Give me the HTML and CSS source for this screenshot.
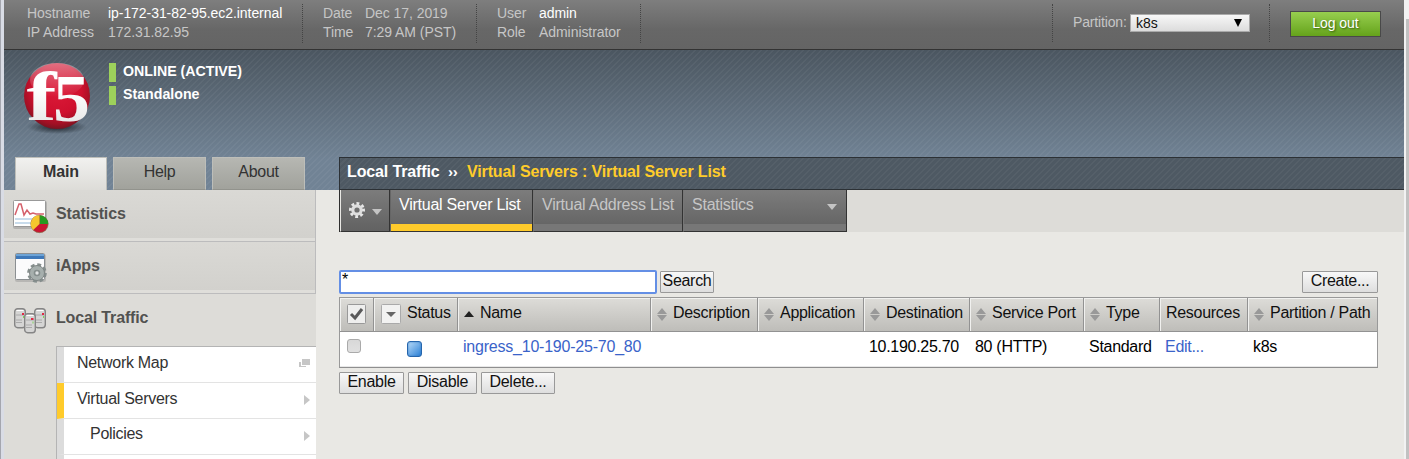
FILE: index.html
```html
<!DOCTYPE html>
<html lang="en">
<head>
<meta charset="utf-8">
<title>Virtual Server List</title>
<link rel="stylesheet" href="styles.css">
</head>
<body>
<div class="window">
  <div class="app">
    <header class="topbar">
      <dl class="info info-host"><dt>Hostname</dt><dd class="bright">ip-172-31-82-95.ec2.internal</dd><dt>IP Address</dt><dd>172.31.82.95</dd></dl>
      <dl class="info info-date"><dt>Date</dt><dd>Dec 17, 2019</dd><dt>Time</dt><dd>7:29 AM (PST)</dd></dl>
      <dl class="info info-user"><dt>User</dt><dd class="bright">admin</dd><dt>Role</dt><dd>Administrator</dd></dl>
      <div class="partition"><span>Partition:</span><div class="select"><span>k8s</span><svg width="8" height="8" viewBox="0 0 8 8"><path d="M0 0h8L4 8z"/></svg></div></div>
      <div class="logout-wrap"><button class="logout">Log out</button></div>
    </header>
    <div class="banner">
      <div class="brand">
        <svg class="logo" width="74" height="76" viewBox="0 0 74 76">
          <defs>
            <radialGradient id="ball" cx=".5" cy=".4" r=".62"><stop offset="0" stop-color="#dc1a38"/><stop offset=".6" stop-color="#cf102e"/><stop offset=".85" stop-color="#a01024"/><stop offset="1" stop-color="#6d1520"/></radialGradient>
            <linearGradient id="gloss" x1="0" y1="0" x2="0" y2="1"><stop offset="0" stop-color="#fff" stop-opacity=".4"/><stop offset="1" stop-color="#fff" stop-opacity="0"/></linearGradient>
            <linearGradient id="letters" x1="0" y1="0" x2="0" y2="1"><stop offset=".4" stop-color="#fff"/><stop offset="1" stop-color="#e0e0e0"/></linearGradient>
            <radialGradient id="shade"><stop offset="0" stop-color="#1b2229"/><stop offset="1" stop-color="#1b2229" stop-opacity="0"/></radialGradient>
          </defs>
          <ellipse cx="37" cy="67" rx="30" ry="7" fill="url(#shade)"/>
          <circle cx="37" cy="36" r="33" fill="url(#ball)"/>
          <ellipse cx="37" cy="20" rx="27" ry="17" fill="url(#gloss)"/>
          <text x="6.500" y="59.500" class="logo-text" fill="url(#letters)" textLength="30" lengthAdjust="spacingAndGlyphs">f</text>
          <text x="33" y="60.500" class="logo-text logo-five" fill="url(#letters)" textLength="37" lengthAdjust="spacingAndGlyphs">5</text>
        </svg>
        <div class="states"><div class="state">ONLINE (ACTIVE)</div><div class="state">Standalone</div></div>
      </div>
      <div class="banner-foot">
        <nav class="main-tabs"><a class="main-tab main-tab-on">Main</a><a class="main-tab">Help</a><a class="main-tab">About</a></nav>
        <div class="crumbs"><span class="crumb-root">Local Traffic</span><span class="crumb-sep">››</span><span class="crumb-page">Virtual Servers : Virtual Server List</span></div>
      </div>
    </div>
    <div class="body">
      <aside class="sidebar">
        <div class="section section-closed">
          <svg width="40" height="40" viewBox="0 0 40 40"><rect x="1" y="3" width="34" height="28" rx="2" fill="#777" opacity=".35"/><rect x="1.500" y="2.500" width="32" height="26" rx="1" fill="#fff" stroke="#999"/><path d="M3 21h29M3 25h29" stroke="#c9dcec" stroke-width="2"/><path d="M3 17l4-11h2l3 11 3-5 3 4 3-1 3 1h8" fill="none" stroke="#d5606b" stroke-width="1.500"/><circle cx="27.500" cy="26" r="8.700" fill="#c91631" stroke="#77764a" stroke-width=".6"/><path d="M27.500 26V17.300a8.700 8.700 0 0 1 8.700 8.700z" fill="#269b20"/><path d="M27.500 26V17.300a8.700 8.700 0 0 0-6.300 14.700z" fill="#f5c62e"/></svg>
          <span>Statistics</span>
        </div>
        <div class="section section-closed">
          <svg width="40" height="40" viewBox="0 0 40 40"><rect x="3" y="4" width="31" height="28" rx="2" fill="#777" opacity=".3"/><rect x="3.500" y="3.500" width="29" height="26" rx="1" fill="#fbfbfc" stroke="#8b8f92"/><path d="M4 4h28v5H4z" fill="#3e78b9"/><path d="M4 4h28v2H4z" fill="#6ca3d6"/><circle cx="25" cy="23" r="8.300" fill="none" stroke="#858e8d" stroke-width="3" stroke-dasharray="3.800 2.718"/><circle cx="25" cy="23" r="7.500" fill="#a6afad" stroke="#7f8685"/><circle cx="25" cy="23" r="3.300" fill="#858e8d"/><circle cx="25" cy="23" r="1.700" fill="#e2e5e5"/></svg>
          <span>iApps</span>
        </div>
        <div class="section section-open">
          <svg width="40" height="40" viewBox="0 0 40 40">
            <defs><g id="server"><rect x=".7" y=".7" width="10.600" height="19" rx="3" fill="#d5d5d4" stroke="#858585" stroke-width="1.400"/><path d="M2.500 2.500h7" stroke="#fff"/><path d="M2 7h8M2 12h6M2 14.500h6" stroke="#aaa"/></g></defs>
            <use href="#server" x="2" y="6"/><use href="#server" x="22" y="6"/><use href="#server" x="12" y="11"/>
            <path d="M10 11h2v2h-2zM30 11h2v2h-2zM19 16h2.500v2H19z" fill="#e02a44"/><path d="M11 14h1v2h-1zM31 14h1v2h-1zM20.500 19.500h1v2h-1z" fill="#7ed45e"/>
          </svg>
          <span>Local Traffic</span>
        </div>
        <nav class="submenu">
          <a class="sub"><span>Network Map</span><svg width="11" height="8" viewBox="0 0 11 8"><path d="M3 0h8v6H3z" fill="#c6c6c6"/><path d="M0 3h2v4h5v1H0z" fill="#c6c6c6"/></svg></a>
          <a class="sub sub-on"><span>Virtual Servers</span><svg width="6" height="10" viewBox="0 0 6 10"><path d="M0 0l6 5-6 5z" fill="#c6c6c6"/></svg></a>
          <a class="sub sub-nested"><span>Policies</span><svg width="6" height="10" viewBox="0 0 6 10"><path d="M0 0l6 5-6 5z" fill="#c6c6c6"/></svg></a>
          <a class="sub"></a>
        </nav>
      </aside>
      <main class="content">
        <div class="tabbar">
          <a class="tab tab-gear"><svg width="18" height="18" viewBox="0 0 18 18"><circle cx="9" cy="9" r="6.500" fill="none" stroke="#e6e6e6" stroke-width="3" stroke-dasharray="2.700 2.405" transform="rotate(-11 9 9)"/><circle cx="9" cy="9" r="4.200" fill="none" stroke="#dedede" stroke-width="3.200"/></svg><svg width="10" height="6" viewBox="0 0 10 6"><path d="M0 0h10L5 6z" fill="#c4c4c4"/></svg></a>
          <a class="tab tab-on tab-list">Virtual Server List</a>
          <a class="tab tab-address">Virtual Address List</a>
          <a class="tab tab-stats"><span>Statistics</span><svg width="10" height="6" viewBox="0 0 10 6"><path d="M0 0h10L5 6z" fill="#c4c4c4"/></svg></a>
        </div>
        <div class="panel">
          <div class="tools"><input class="search" value="*"><button class="btn btn-search">Search</button><button class="btn btn-create">Create...</button></div>
          <div class="grid">
            <div class="th th-check"><svg width="19" height="20" viewBox="0 0 19 20"><rect x=".5" y=".5" width="18" height="19" rx="1" fill="#eeeeed" stroke="#999"/><path d="M4 10l4 4 7-9" fill="none" stroke="#595959" stroke-width="3"/></svg></div>
            <div class="th th-status"><svg width="20" height="20" viewBox="0 0 20 20"><rect x=".5" y=".5" width="19" height="19" rx="1" fill="#f2f2f1" stroke="#aaa"/><path d="M5 8h10l-5 5z" fill="#666"/></svg><span>Status</span></div>
            <div class="th th-name"><svg width="10" height="6" viewBox="0 0 10 6"><path d="M0 6h10L5 0z" fill="#222"/></svg><span>Name</span></div>
            <div class="th"><svg class="sort" width="10" height="13" viewBox="0 0 10 13"><path d="M0 6h10L5 0zM0 7h10L5 13z"/></svg><span>Description</span></div>
            <div class="th"><svg class="sort" width="10" height="13" viewBox="0 0 10 13"><path d="M0 6h10L5 0zM0 7h10L5 13z"/></svg><span>Application</span></div>
            <div class="th"><svg class="sort" width="10" height="13" viewBox="0 0 10 13"><path d="M0 6h10L5 0zM0 7h10L5 13z"/></svg><span>Destination</span></div>
            <div class="th"><svg class="sort" width="10" height="13" viewBox="0 0 10 13"><path d="M0 6h10L5 0zM0 7h10L5 13z"/></svg><span>Service Port</span></div>
            <div class="th"><svg class="sort" width="10" height="13" viewBox="0 0 10 13"><path d="M0 6h10L5 0zM0 7h10L5 13z"/></svg><span>Type</span></div>
            <div class="th"><span>Resources</span></div>
            <div class="th"><svg class="sort" width="10" height="13" viewBox="0 0 10 13"><path d="M0 6h10L5 0zM0 7h10L5 13z"/></svg><span>Partition / Path</span></div>
            <div class="td td-check"><span class="checkbox"></span></div>
            <div class="td td-status"><span class="status-icon"></span></div>
            <div class="td"><a class="link link-name">ingress_10-190-25-70_80</a></div>
            <div class="td"></div>
            <div class="td"></div>
            <div class="td">10.190.25.70</div>
            <div class="td">80 (HTTP)</div>
            <div class="td">Standard</div>
            <div class="td"><a class="link">Edit...</a></div>
            <div class="td">k8s</div>
          </div>
          <div class="actions"><button class="btn btn-enable">Enable</button><button class="btn btn-disable">Disable</button><button class="btn btn-delete">Delete...</button></div>
        </div>
      </main>
    </div>
  </div>
  <div class="scrollbar"><div class="thumb"></div></div>
</div>
</body>
</html>
```
FILE: styles.css
```css
* { box-sizing: border-box; }
body { margin: 0; overflow: hidden; font-family: "Liberation Sans", Arial, sans-serif; font-size: 16px; letter-spacing: -.29px; background: #e9e8e4; }
svg { display: block; flex: none; }
button, input { font: inherit; letter-spacing: inherit; margin: 0; border-radius: 0; outline: 0; }
.window { display: flex; width: 1409px; height: 459px; overflow: hidden; border-left: 1px solid #a4a6ae; }
.app { width: 1403px; border-left: 3px solid #d9dce5; flex: none; }
.scrollbar { flex: 1; background: #f2f2f2; padding: 19px 0 0 2px; }
.thumb { height: 440px; background: #c1c1c1; }

.topbar { display: flex; height: 50px; padding-top: 4px; border-bottom: 1px solid #333; background: linear-gradient(#7e7e7e, #676767 60%, #646464); color: #c6c6c6; font-size: 14px; letter-spacing: -.06px; }
.info { display: grid; grid-auto-rows: 19px; line-height: 19px; margin: 0; height: 39px; border-right: 1px dotted #444; white-space: nowrap; }
.info dd { margin: 0; }
.bright { color: #fff; }
.info-host { width: 299px; padding-left: 23px; grid-template-columns: 81px 1fr; }
.info-date { width: 174px; padding-left: 20px; grid-template-columns: 42px 1fr; }
.info-user { width: 164px; padding-left: 20px; grid-template-columns: 42px 1fr; }
.partition { display: flex; align-items: flex-start; margin-left: 411px; width: 218px; height: 38px; padding: 10px 0 0 20px; border: 1px dotted #444; border-width: 0 1px; line-height: 17px; }
.partition > span { width: 57px; flex: none; letter-spacing: -.15px; }
.select { display: flex; align-items: center; justify-content: space-between; width: 120px; height: 18px; padding: 0 7px 0 5px; border: 1px solid #aaa; background: linear-gradient(#f7f7f7, #dcdcdc); color: #111; }
.logout-wrap { padding: 7px 0 0 20px; }
.logout { width: 91px; height: 26px; padding: 0 0 3px; border: 1px solid #494949; background: linear-gradient(#97ce4f, #65a31b); color: #fff; text-shadow: 1px 1px 2px #35570e; }

.banner { display: flex; flex-direction: column; justify-content: space-between; height: 140px; background: repeating-linear-gradient(135deg, rgba(255,255,255,.045) 0 2px, transparent 2px 4.243px), linear-gradient(#4b5660, #718395 78%, #718395); }
.brand { display: flex; padding: 10px 0 0 16px; }
.logo-text { font-family: "Liberation Serif", serif; font-weight: bold; font-size: 69px; letter-spacing: 0; }
.logo-five { font-size: 67px; }
.states { padding: 3px 0 0 15px; display: grid; grid-auto-rows: 19px; row-gap: 4px; align-content: start; }
.state { border-left: 7px solid #9dd15b; padding-left: 7px; color: #fff; font-weight: bold; font-size: 14.2px; line-height: 16px; letter-spacing: 0; }
.banner-foot { display: flex; justify-content: space-between; height: 33px; }
.main-tabs { display: flex; gap: 6px; padding-left: 11px; }
.main-tab { width: 93px; height: 33px; border: 1px solid #bdbeb9; border-bottom-color: #92938d; background: linear-gradient(#b6b7b2, #a1a29c); color: #333; text-align: center; line-height: 28px; }
.main-tab-on { width: 92px; background: linear-gradient(#f1f1ef, #dddcd8); border-bottom: 0; font-weight: bold; letter-spacing: -.15px; }
.crumbs { display: flex; width: 1065px; padding-left: 7px; border: 1px solid #2c3135; border-right: 0; background: repeating-linear-gradient(135deg, rgba(255,255,255,.04) 0 2px, transparent 2px 4.243px), #4e5963; color: #fff; font-weight: bold; line-height: 28px; letter-spacing: -.13px; white-space: nowrap; }
.crumb-root { width: 101px; }
.crumb-sep { width: 19px; font-size: 15px; }
.crumb-page { color: #ffcc2a; }

.body { display: flex; height: 269px; }
.sidebar { width: 312px; background: #dddcd8; }
.section { display: flex; align-items: flex-start; height: 52px; padding: 8px 0 0 8px; color: #525250; font-weight: bold; line-height: 32px; letter-spacing: -.15px; }
.section svg { margin-right: 4px; }
.section-closed { border-right: 1px solid #bcbcbd; border-bottom: 1px solid #bcbcbd; background: linear-gradient(#dad9d5, #d2d1cd 48px, #dfdeda 48px); }
.submenu { margin-left: 52px; border: 1px solid #b4b4b4; border-width: 1px 0 0 1px; }
.sub { display: flex; justify-content: space-between; align-items: flex-start; height: 36px; padding: 13px 6px 0 13px; border-left: 7px solid #dcdcdc; border-bottom: 1px solid #e3e3e3; background: #fff; color: #333; }
.sub span { line-height: 18px; margin-top: -6px; }
.sub svg { margin-top: -1px; }
.sub-on { border-left-color: #ffcb2b; }
.sub-nested { padding-left: 26px; }
.sub-nested span { margin-top: -7px; }

.content { flex: 1; padding-left: 23px; }
.tabbar { display: flex; height: 42px; background: #dddcd8; border-left: 1px solid #2f2f2f; white-space: nowrap; letter-spacing: -.24px; }
.tab { display: flex; height: 42px; border-right: 1px solid #333; border-bottom: 1px solid #333; border-left: 1px solid #777; background: linear-gradient(#7c7c7c, #666 34px, #777 34px); color: #c6c6c6; line-height: 29px; }
.tab-gear { width: 50px; padding: 11px 0 0 7px; gap: 6px; border-left: 1px solid #e9e8e4; background: linear-gradient(#7c7c7c, #666 34px, #626262); }
.tab-gear svg:last-child { margin-top: 8px; }
.tab-list { width: 143px; padding-left: 8px; }
.tab-address { width: 150px; padding-left: 8px; }
.tab-stats { width: 164px; padding: 0 9px 0 8px; justify-content: space-between; }
.tab-stats svg { margin-top: 14px; }
.tab-on { border-left-color: #666; background: linear-gradient(#7c7c7c, #666 34px, #ffcb2b 34px); color: #fff; }
.panel { width: 1039px; padding-top: 38px; }
.tools { display: flex; align-items: flex-start; height: 27px; }
.search { width: 318px; height: 24px; padding: 0 1px 4px; border: 2px solid #648fe5; border-radius: 2px; background: #fff; color: #000; }
.btn { height: 22px; padding: 0 0 3px; border: 1px solid #999; border-radius: 1px; background: linear-gradient(#f8f8f8, #dedede); color: #111; line-height: 17px; white-space: nowrap; }
.btn-search { width: 54px; margin: 1px 0 0 3px; }
.btn-create { width: 76px; margin: 1px 0 0 auto; }
.grid { display: grid; grid-template-columns: 34px 84px 193px 107px 106px 106px 114px 76px 88px 129px; grid-template-rows: 34px 35px; width: 1039px; border: 1px solid #999; border-bottom: 1px solid #8f8f8f; }
.th { display: flex; align-items: flex-start; padding: 6px 0 0 6px; border-right: 1px solid #929292; border-bottom: 1px solid #929292; background: linear-gradient(#dddcd8, #bebdb9); box-shadow: inset 1px 1px #f1f1ef; line-height: 20px; color: #111; white-space: nowrap; }
.th:nth-child(10) { border-right: 0; }
.th .sort { margin: 4px 6px 0 0; fill: #999; }
.th span { margin-top: -1px; }
.th-check { padding-left: 7px; }
.th-status { padding-left: 7px; gap: 6px; }
.th-name { gap: 6px; }
.th-name svg { margin-top: 7px; }
.td { padding: 5px 0 0 5px; background: #fff; color: #000; line-height: 20px; white-space: nowrap; border-bottom: 1px solid #e8e8e8; }
.td-check { padding: 7px; }
.checkbox { display: block; width: 14px; height: 14px; border: 1px solid #aaa; border-radius: 3px; background: linear-gradient(#d8d8d8, #e0e0e0); }
.td-status { padding: 9px 0 0 33px; }
.status-icon { display: block; width: 15px; height: 16px; border: 1px solid #2565ac; border-radius: 3px; background: linear-gradient(135deg, #b7daf8, #2b80d6); box-shadow: inset 0 0 2px #2f76c2; }
.link { color: #3a63c9; }
.link-name { letter-spacing: -.22px; }
.actions { display: flex; gap: 4px; padding-top: 4px; }
.btn-enable { width: 65px; }
.btn-disable { width: 69px; }
.btn-delete { width: 74px; }
```
